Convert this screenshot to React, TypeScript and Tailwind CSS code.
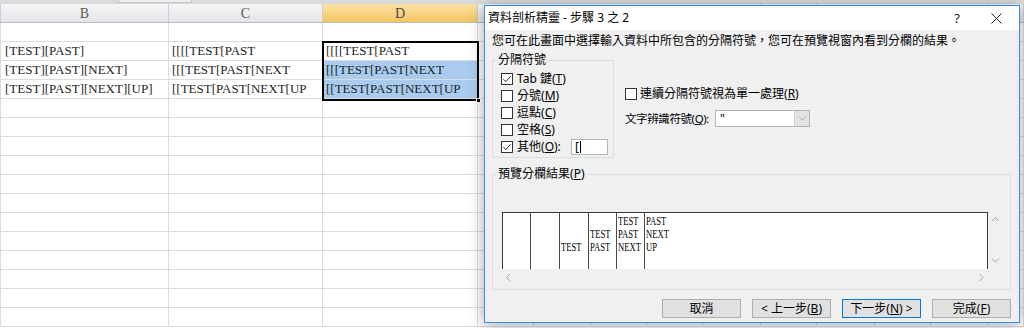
import React from "react"

const COLS = [
  { name: "B", w: "w-[169px] border-l", sel: false },
  { name: "C", w: "w-[154px]", sel: false },
  { name: "D", w: "w-[155px]", sel: true },
  { name: "", w: "w-[56px]", sel: false },
  { name: "", w: "w-[57px]", sel: false },
  { name: "", w: "w-[56px]", sel: false },
  { name: "", w: "w-[56px]", sel: false },
  { name: "", w: "w-[58px]", sel: false },
  { name: "", w: "w-[56px]", sel: false },
  { name: "", w: "w-[58px]", sel: false },
  { name: "", w: "w-[56px]", sel: false },
  { name: "", w: "w-[57px]", sel: false },
  { name: "", w: "flex-1", sel: false },
]

const DATA: Record<number, string[]> = {
  1: ["[TEST][PAST]", "[[[[TEST[PAST", "[[[[TEST[PAST"],
  2: ["[TEST][PAST][NEXT]", "[[[TEST[PAST[NEXT", "[[[TEST[PAST[NEXT"],
  3: ["[TEST][PAST][NEXT][UP]", "[[TEST[PAST[NEXT[UP", "[[TEST[PAST[NEXT[UP"],
}

// preview columns: text per line
const PREVIEW = [
  { w: "w-[27px]", line: false, rows: ["", "", ""] },
  { w: "w-[29px]", line: true, rows: ["", "", ""] },
  { w: "w-[29px]", line: true, rows: ["", "", "TEST"] },
  { w: "w-[28px]", line: true, rows: ["", "TEST", "PAST"] },
  { w: "w-[28px]", line: true, rows: ["TEST", "PAST", "NEXT"] },
  { w: "flex-1", line: true, rows: ["PAST", "NEXT", "UP"] },
]

function Sheet() {
  const rows = Array.from({ length: 16 }, (_, i) => i)
  return (
    <div className="w-[1024px] h-[328px] bg-white font-[family-name:'Liberation_Serif',serif] text-[13px] text-[#1e1e1e]">
      {/* formula bar edge */}
      <div className="h-[4px] bg-[#d9dadc] flex">
        <div className="ml-[118px] w-[74px] h-[3px] bg-[#eeeeee] border border-[#c4c4c4] border-t-0" />
      </div>

      {/* column header */}
      <div className="h-[19px] flex border-b border-[#b8bcc2]">
        {COLS.map((c, i) => (
          <div
            key={i}
            className={`${c.w} h-full flex items-center justify-center border-r border-[#c8cbd0] text-[14px] ${
              c.sel
                ? "bg-gradient-to-b from-[#fbe3a2] to-[#f4c55f] text-[#4a4a4a]"
                : "bg-gradient-to-b from-[#f4f5f6] to-[#e3e5e8] text-[#5b5b5b]"
            }`}
          >
            {c.name}
          </div>
        ))}
      </div>

      {/* cells */}
      {rows.map((r) => (
        <div key={r} className="h-[19px] flex">
          {COLS.map((c, ci) => {
            const text = DATA[r]?.[ci] ?? ""
            const blue = ci === 2 && (r === 2 || r === 3)
            return (
              <div
                key={ci}
                className={`${c.w} h-full flex items-center border-r border-b border-[#dadcdf] overflow-hidden whitespace-nowrap ${
                  ci === 0 ? "pl-[4px] border-l-[#dadcdf]" : "pl-[3px]"
                } ${blue ? "bg-[#a8cbee]" : ""}`}
              >
                {text}
              </div>
            )
          })}
        </div>
      ))}
    </div>
  )
}

function Check({ checked }: { checked?: boolean }) {
  return (
    <span className="w-[12px] h-[12px] border border-[#333333] bg-white flex items-center justify-center shrink-0">
      {checked && (
        <svg width="10" height="10" viewBox="0 0 10 10">
          <path d="M1.3 5.2 L3.9 7.7 L8.7 2.2" fill="none" stroke="#333333" strokeWidth="1" />
        </svg>
      )}
    </span>
  )
}

function Key({ label, k, tail }: { label: string; k: string; tail?: string }) {
  return (
    <span className="whitespace-nowrap">
      {label}(<span className="underline underline-offset-[1px]">{k}</span>){tail}
    </span>
  )
}

function Chevron({ dir }: { dir: "up" | "down" | "left" | "right" }) {
  const d = {
    up: "M1 5 L4.5 1.5 L8 5",
    down: "M1 1.5 L4.5 5 L8 1.5",
    left: "M5 1 L1.5 4.5 L5 8",
    right: "M1.5 1 L5 4.5 L1.5 8",
  }[dir]
  const horiz = dir === "up" || dir === "down"
  return (
    <svg width={horiz ? 9 : 7} height={horiz ? 7 : 9} viewBox={horiz ? "0 0 9 7" : "0 0 7 9"}>
      <path d={d} fill="none" stroke="#a6a6a6" strokeWidth="1" />
    </svg>
  )
}

function Dialog() {
  return (
    <div className="absolute left-[484px] top-[5px] w-[536px] h-[318px] border border-[#3a8ee6] bg-[#f0f0f0] shadow-[0_2px_14px_rgba(0,0,0,0.35)] flex flex-col text-[12px] leading-[16px] text-black font-[family-name:'Noto_Sans','Noto_Sans_CJK_TC',sans-serif]">
      {/* title bar */}
      <div className="h-[24px] bg-white flex items-center pl-[3px] shrink-0">
        <span className="flex-1">資料剖析精靈 - 步驟 3 之 2</span>
        <span className="w-[32px] text-center text-[13px] text-[#222]">?</span>
        <span className="w-[46px] flex justify-center">
          <svg width="11" height="11" viewBox="0 0 11 11">
            <path d="M0.5 0.5 L10.5 10.5 M10.5 0.5 L0.5 10.5" stroke="#222" strokeWidth="1" />
          </svg>
        </span>
      </div>

      <div className="flex flex-col pl-[7px] pr-[8px]">
        <p className="mt-[3px]">您可在此畫面中選擇輸入資料中所包含的分隔符號，您可在預覽視窗內看到分欄的結果。</p>

        <div className="flex mt-[3px]">
          <fieldset className="w-[122px] h-[106px] border border-[#dcdcdc] flex flex-col">
            <legend className="ml-[4px] px-[1px]">分隔符號</legend>
            <div className="flex flex-col mt-[2px] pl-[8px]">
              <label className="h-[17px] flex items-center gap-[4px]">
                <Check checked />
                <Key label="Tab 鍵" k="T" />
              </label>
              <label className="h-[17px] flex items-center gap-[4px]">
                <Check />
                <Key label="分號" k="M" />
              </label>
              <label className="h-[17px] flex items-center gap-[4px]">
                <Check />
                <Key label="逗點" k="C" />
              </label>
              <label className="h-[17px] flex items-center gap-[4px]">
                <Check />
                <Key label="空格" k="S" />
              </label>
              <div className="h-[17px] flex items-center gap-[4px]">
                <Check checked />
                <span className="w-[50px]">
                  <Key label="其他" k="O" tail=":" />
                </span>
                <span className="w-[37px] h-[16px] bg-white border border-[#b4b4b4] flex items-center pl-[3px] leading-[14px]">
                  [<span className="w-[1px] h-[12px] bg-black ml-[1px]" />
                </span>
              </div>
            </div>
          </fieldset>

          <div className="flex flex-col ml-[11px] pt-[34px]">
            <label className="h-[16px] flex items-center gap-[3px]">
              <Check />
              <Key label="連續分隔符號視為單一處理" k="R" />
            </label>
            <div className="flex items-center mt-[7px]">
              <span className="w-[90px] mt-[2px] text-[11.5px] tracking-[-0.4px]">
                <Key label="文字辨識符號" k="Q" tail=":" />
              </span>
              <div className="w-[95px] h-[17px] bg-white border border-[#b4b4b4] flex">
                <span className="flex-1 pl-[4px] leading-[15px]">"</span>
                <span className="w-[15px] h-full bg-[#e3e3e3] border-l border-[#cfcfcf] flex items-center justify-center">
                  <Chevron dir="down" />
                </span>
              </div>
            </div>
          </div>
        </div>

        <fieldset className="w-[519px] h-[124px] border border-[#dcdcdc] mt-[8px]">
          <legend className="ml-[4px] px-[1px]">
            <Key label="預覽分欄結果" k="P" />
          </legend>
          <div className="ml-[9px] mt-[30px] w-[501px] flex flex-col">
            <div className="flex h-[57px]">
              <div className="w-[486px] h-full bg-white border-l border-t border-r border-[#3a3a3a] flex font-[family-name:'Liberation_Serif',serif] text-[13px] leading-[13px] text-black">
                {PREVIEW.map((c, i) => (
                  <div key={i} className={`${c.w} h-full pt-[1px] pl-[1px] ${c.line ? "border-l border-[#4a4a4a]" : ""}`}>
                    {c.rows.map((t, j) => (
                      <div key={j} className="h-[13px] whitespace-nowrap scale-x-[0.66] origin-left">
                        {t}
                      </div>
                    ))}
                  </div>
                ))}
              </div>
              <div className="w-[15px] h-full flex flex-col items-center justify-between pt-[4px] pb-[5px]">
                <Chevron dir="up" />
                <Chevron dir="down" />
              </div>
            </div>
            <div className="w-[486px] h-[16px] flex items-center justify-between px-[3px]">
              <Chevron dir="left" />
              <Chevron dir="right" />
            </div>
          </div>
        </fieldset>

        <div className="flex justify-end gap-[11px] mt-[9px]">
          <button className="w-[79px] h-[19px] bg-[#e1e1e1] border border-[#adadad] leading-[16px]">取消</button>
          <button className="w-[79px] h-[19px] bg-[#e1e1e1] border border-[#adadad] leading-[16px]">
            &lt; <Key label="上一步" k="B" />
          </button>
          <button className="w-[79px] h-[19px] bg-[#e1e1e1] border border-[#0078d7] leading-[16px]">
            <Key label="下一步" k="N" /> &gt;
          </button>
          <button className="w-[79px] h-[19px] bg-[#e1e1e1] border border-[#adadad] leading-[16px]">
            <Key label="完成" k="F" />
          </button>
        </div>
      </div>
    </div>
  )
}

export default function App() {
  return (
    <div className="relative w-[1024px] h-[328px] overflow-hidden">
      <Sheet />
      {/* selection D2:D4 */}
      <div className="absolute left-[322px] top-[41px] w-[157px] h-[60px] border-2 border-black">
        <div className="absolute right-[-4px] bottom-[-4px] w-[5px] h-[5px] bg-black border border-white" />
      </div>
      <Dialog />
    </div>
  )
}
